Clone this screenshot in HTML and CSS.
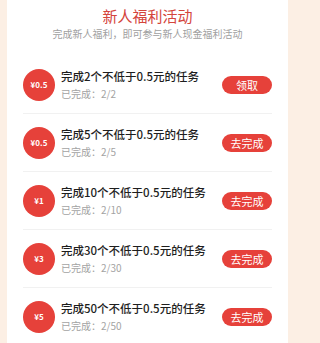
FILE: index.html
```html
<!DOCTYPE html>
<html>
<head>
<meta charset="utf-8">
<link rel="stylesheet" href="styles.css">
</head>
<body>
<div class="card">
  <div class="header">
    <div class="title">新人福利活动</div>
    <div class="subtitle">完成新人福利，即可参与新人现金福利活动</div>
  </div>
  <div class="list">
    <div class="row">
      <div class="coin">¥0.5</div>
      <div class="info">
        <div class="name">完成2个不低于0.5元的任务</div>
        <div class="progress">已完成：2/2</div>
      </div>
      <div class="btn">领取</div>
    </div>
    <div class="row">
      <div class="coin">¥0.5</div>
      <div class="info">
        <div class="name">完成5个不低于0.5元的任务</div>
        <div class="progress">已完成：2/5</div>
      </div>
      <div class="btn">去完成</div>
    </div>
    <div class="row">
      <div class="coin">¥1</div>
      <div class="info">
        <div class="name">完成10个不低于0.5元的任务</div>
        <div class="progress">已完成：2/10</div>
      </div>
      <div class="btn">去完成</div>
    </div>
    <div class="row">
      <div class="coin">¥3</div>
      <div class="info">
        <div class="name">完成30个不低于0.5元的任务</div>
        <div class="progress">已完成：2/30</div>
      </div>
      <div class="btn">去完成</div>
    </div>
    <div class="row">
      <div class="coin">¥5</div>
      <div class="info">
        <div class="name">完成50个不低于0.5元的任务</div>
        <div class="progress">已完成：2/50</div>
      </div>
      <div class="btn">去完成</div>
    </div>
  </div>
</div>
</body>
</html>
```

FILE: styles.css
```css
html, body {
  margin: 0;
  padding: 0;
  background: #fcefe4;
  font-family: "Noto Sans CJK SC", "Noto Sans", sans-serif;
}
body {
  width: 296px;
  height: 343px;
  overflow: hidden;
}
.card {
  margin: 0 8px 0 7px;
  background: #ffffff;
  height: 343px;
  overflow: hidden;
}
.header {
  padding-top: 6px;
  text-align: center;
}
.title {
  font-size: 15px;
  line-height: 20px;
  color: #d4453c;
}
.subtitle {
  margin-top: 1px;
  font-size: 10px;
  line-height: 14px;
  color: #a0a0a0;
}
.list {
  margin-top: 15px;
  padding: 0 16px;
}
.row {
  display: flex;
  align-items: center;
  height: 57px;
  border-bottom: 1px solid #f1f1f1;
}
.coin {
  width: 32px;
  height: 32px;
  border-radius: 50%;
  background: #e6413a;
  color: #fff;
  font-size: 8px;
  font-weight: bold;
  display: flex;
  align-items: center;
  justify-content: center;
  flex: none;
}
.info {
  flex: 1;
  margin-left: 6px;
  display: flex;
  flex-direction: column;
  gap: 2px;
}
.name {
  font-size: 11.5px;
  line-height: 16px;
  color: #1e1e1e;
  font-weight: 500;
}
.progress {
  font-size: 10px;
  line-height: 15px;
  color: #a3a3a3;
}
.btn {
  flex: none;
  width: 50px;
  height: 18px;
  border-radius: 9px;
  background: #e6413a;
  color: #fff;
  font-size: 11px;
  line-height: 18px;
  text-align: center;
}
```
